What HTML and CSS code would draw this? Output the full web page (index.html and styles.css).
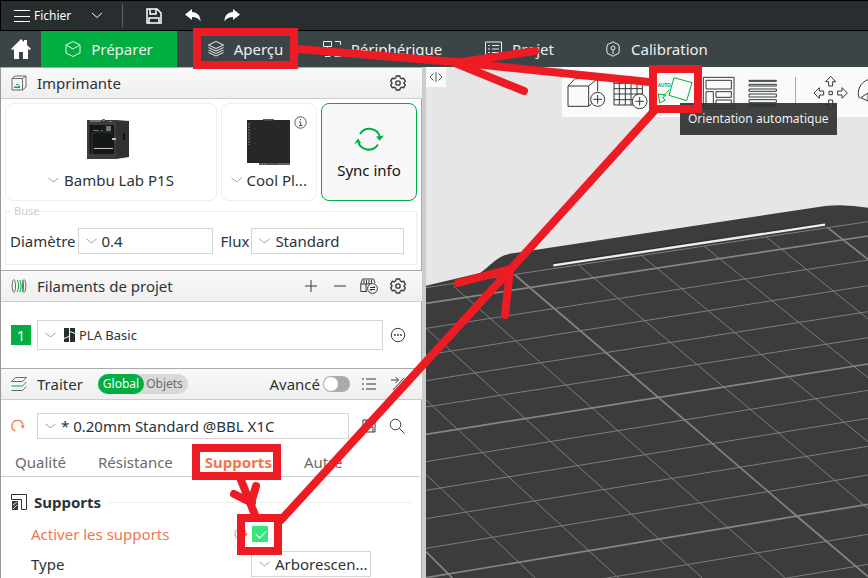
FILE: index.html
```html
<!DOCTYPE html>
<html lang="fr">
<head>
<meta charset="utf-8">
<title>Préparer</title>
<link rel="stylesheet" href="styles.css">
</head>
<body>
<svg class="defs" aria-hidden="true">
  <symbol id="chevron" viewBox="0 0 11 6"><path d="M.5 1C3 2.600 4 4.500 5.500 4.500S8 2.600 10.500 1"/></symbol>
  <symbol id="gear" viewBox="0 0 16 16"><path d="M6.300 1h3.400l.6 1.900 1.400.8 2-.4 1.600 2.900L13.900 8l1.400 1.800-1.600 2.900-2-.4-1.400.8-.6 1.900H6.300l-.6-1.900-1.400-.8-2 .4L.7 9.800 2.100 8 .7 6.200l1.600-2.900 2 .4 1.400-.8z"/><circle cx="8" cy="8" r="2.200"/></symbol>
  <symbol id="reset" viewBox="0 0 14 14"><path d="M4.500 12A5.500 5.500 0 1 1 12 6.500"/><path class="solid" d="M9.500 6.500h4.300L12 9.800z"/></symbol>
</svg>

<header class="titlebar">
  <button class="file-menu">
    <svg width="16" height="14" viewBox="0 0 16 14"><path d="M0 1.500h16M0 7.500h16M0 12.500h16"/></svg>
    Fichier
    <svg class="caret" width="12" height="7" viewBox="0 0 12 7"><path d="M1 1l5 4.500L11 1"/></svg>
  </button>
  <span class="bar-rule"></span>
  <button class="tool" aria-label="Enregistrer"><svg width="16" height="16" viewBox="0 0 16 16"><path stroke-width="1.500" d="M1 1h10l4 4v10H1zM4 1v5h6V1M3 15v-5h10v5"/></svg></button>
  <button class="tool solid-icon" aria-label="Annuler"><svg width="16" height="13" viewBox="0 0 16 13"><path d="M0 5.500L7 0v3c5 0 8.500 3.500 8.500 9.500C14 9.500 11 8 7 8v3z"/></svg></button>
  <button class="tool solid-icon" aria-label="Rétablir"><svg width="16" height="13" viewBox="0 0 16 13"><path d="M16 5.500L9 0v3C4 3 .5 6.500.5 12.500 2 9.500 5 8 9 8v3z"/></svg></button>
</header>

<nav class="tabs">
  <button class="home" aria-label="Accueil"><svg width="20" height="20" viewBox="0 0 20 20"><path d="M10 0L0 10l1.500 1L3 10v10h5v-7h4v7h5V10l1.500 1L20 10l-4-4V1h-3v2z"/></svg></button>
  <button class="tab active"><svg width="16" height="16" viewBox="0 0 16 16"><path d="M8 .5l7 3.500v8l-7 3.500L1 12V4zM1 4l7 4 7-4"/></svg>Préparer</button>
  <button class="tab"><svg width="16" height="16" viewBox="0 0 16 16"><path d="M8 .5L15.500 4 8 7.500.5 4zM.5 6.500L8 10l7.500-3.500M.5 9L8 12.500 15.500 9M.5 11.500L8 15l7.500-3.500"/></svg>Aperçu</button>
  <button class="tab"><svg width="18" height="16" viewBox="0 0 18 16"><path d="M.5.500h8v5h-8zM4.500 5.500v5M2 10.500h5v5H2M12 .5h5.500V4M17.500 11v4.500H12V12"/></svg>Périphérique</button>
  <button class="tab"><svg width="17" height="16" viewBox="0 0 17 16"><path d="M.5 1h16v14H.5zM3 4.500h2M7 4.500h7M3 8h2M7 8h7M3 11.500h2M7 11.500h7"/></svg>Projet</button>
  <button class="tab"><svg width="16" height="16" viewBox="0 0 16 16"><path d="M6 2L8 .7 10 2l3.500 1.500.7 2.500v4l-.7 2.500L10 14l-2 1.300L6 14l-3.500-1.500L1.800 10V6l.7-2.500z"/><circle cx="8" cy="7" r="2"/><path d="M8 9v4"/></svg>Calibration</button>
</nav>

<main class="workspace">
  <aside class="sidebar">
    <div class="head">
      <svg class="lead" width="16" height="16" viewBox="0 0 16 16"><path d="M1 3.500h10.500V15H1zM1 3.500L4 1h11L11.500 3.500M15 1v11l-3.500 3"/><path class="green" d="M3 12h6L7 9.500H5M3 12.500h6"/></svg>
      <h2>Imprimante</h2>
      <button class="icon-btn" aria-label="Réglages de l'imprimante"><svg width="16" height="16"><use href="#gear"/></svg></button>
    </div>

    <div class="cards">
      <div class="card">
        <svg width="48" height="41" viewBox="0 0 48 41"><path fill="#3b3d3d" d="M0 1h29v39H0z"/><path fill="#303131" d="M29 1l13 1v36l-13 2z"/><path fill="#151718" d="M2.500 6H27v29H2.500z"/><path fill="#6f7677" d="M3 1h11v2H3zM15 0h3v2h-3zM19 7h5v5h-5z"/><path d="M5 35V15l5-2h13l3 3M6 29h20" fill="none" stroke="#353738"/><path fill="#c0c0be" d="M7 29h19v1H7zM25 19h4v2h-4z"/><path fill="#777" d="M6 11h6v1H6zM14 11h2v1h-2zM21 8h2v1h-2zM22 2h3v1h-3z"/><path fill="#111" d="M36 14h2v7h-2z"/></svg>
        <label class="pick"><svg class="chev"><use href="#chevron"/></svg><select aria-label="Imprimante"><option>Bambu Lab P1S</option></select></label>
      </div>
      <div class="card plate">
        <svg width="44" height="46" viewBox="0 0 44 46"><path fill="#555" d="M16 0h11v3H16zM12 43h31v3H12z"/><path fill="#262828" d="M0 1h43v43H0z"/><path stroke="#858585" stroke-dasharray="2 1" d="M2 4v22M14 45h6M32 45h10"/><path stroke="#666" d="M17 1h9"/></svg>
        <button class="info" aria-label="Informations"><svg width="13" height="13" viewBox="0 0 13 13"><circle cx="6.500" cy="6.500" r="5.700"/><path d="M6.500 3v1.300M5 6h1.700v3.500M4.800 9.500h3.600"/></svg></button>
        <label class="pick"><svg class="chev"><use href="#chevron"/></svg><select aria-label="Plateau"><option>Cool Pl...</option></select></label>
      </div>
      <button class="card sync">
        <svg width="30" height="25" viewBox="0 0 30 25"><path d="M6 7A11 11 0 0 1 26 10M24 17.500A11 11 0 0 1 4 14"/><path class="solid" d="M22 9.500l3.700 4.300L30 8.500l-3.500.8zM0 17.500l4-6 3.500 5-3.500-1.500z"/></svg>
        Sync info
      </button>
    </div>

    <fieldset class="nozzle">
      <legend>Buse</legend>
      <label for="diam">Diamètre</label>
      <span class="field diam"><svg class="chev"><use href="#chevron"/></svg><select id="diam"><option>0.4</option></select></span>
      <label for="flux" class="flux-label">Flux</label>
      <span class="field flux"><svg class="chev"><use href="#chevron"/></svg><select id="flux"><option>Standard</option></select></span>
    </fieldset>

    <div class="head">
      <svg class="lead" width="16" height="16" viewBox="0 0 16 16"><path d="M3 1.500C.5 3 .5 13 3 14.500M13 1.500c2.500 1.500 2.500 11.500 0 13M3 1.500C5 3 5 13 3 14.500M13 1.500c-2 1.500-2 11.500 0 13"/><path class="green" d="M6 2c2 1.500 2 10.500 0 12M8.500 2c2 1.500 2 10.500 0 12M11 2c2 1.500 2 10.500 0 12"/></svg>
      <h2>Filaments de projet</h2>
      <button class="icon-btn" aria-label="Ajouter"><svg width="14" height="14" viewBox="0 0 14 14"><path d="M7 1v12M1 7h12"/></svg></button>
      <button class="icon-btn" aria-label="Retirer"><svg width="14" height="14" viewBox="0 0 14 14"><path d="M1 7h12"/></svg></button>
      <button class="icon-btn" aria-label="Synchroniser les filaments"><svg width="18" height="16" viewBox="0 0 18 16"><path d="M7 13.500H.8V6L2.500 1h11L15 5M1 6h12M4 2v4M6.500 2v4M9 2v4M11.500 2v4M6 6v7"/><circle cx="12.500" cy="10.500" r="4.900" fill="#f6f6f6"/><path d="M10 9.500h5l-1.500-1.500M15 11.500h-5l1.500 1.500"/></svg></button>
      <button class="icon-btn" aria-label="Réglages des filaments"><svg width="16" height="16"><use href="#gear"/></svg></button>
    </div>

    <div class="filament">
      <span class="slot">1</span>
      <span class="field fill"><svg class="chev"><use href="#chevron"/></svg><svg class="brand" width="11" height="14" viewBox="0 0 11 14"><path d="M0 0h5v8L0 10zM0 11l5-2v5H0zM6 0h5v5L6 3zM6 4l5 2v8H6z"/></svg><select aria-label="Filament 1"><option>PLA Basic</option></select></span>
      <button class="icon-btn" aria-label="Plus"><svg width="16" height="16" viewBox="0 0 16 16"><circle cx="8" cy="8" r="6.700"/><path class="dots" d="M4.300 8h1.400M7.300 8h1.400M10.300 8h1.400"/></svg></button>
    </div>

    <div class="head">
      <svg class="lead" width="16" height="16" viewBox="0 0 16 16"><path d="M4.500 1.500h11l-4 4H.5zM.5 14.500h11l4-4"/><path class="green" d="M.5 10h11l4-4"/></svg>
      <h2>Traiter</h2>
      <div class="segment"><button class="on">Global</button><button>Objets</button></div>
      <label class="advanced">Avancé<input type="checkbox" class="switch"></label>
      <button class="icon-btn" aria-label="Liste"><svg width="16" height="16" viewBox="0 0 16 16"><path d="M5 3h10M5 8h10M5 13h10M1 3h2M1 8h2M1 13h2"/></svg></button>
      <button class="icon-btn" aria-label="Comparer"><svg width="16" height="16" viewBox="0 0 16 16"><path d="M1 4h7M5.500 1L8.500 4l-3 3M14 2L3 14M15 11H9M11.500 8.500L9 11l2.500 3"/></svg></button>
    </div>

    <div class="preset">
      <button class="icon-btn warn" aria-label="Rétablir le profil"><svg width="14" height="14"><use href="#reset"/></svg></button>
      <span class="field fill"><svg class="chev"><use href="#chevron"/></svg><select aria-label="Profil"><option>* 0.20mm Standard @BBL X1C</option></select></span>
      <button class="icon-btn" aria-label="Enregistrer le profil"><svg width="14" height="14" viewBox="0 0 14 14"><path d="M1 1h12v12H1zM4 1v4h6V1M3 13V8h8v5"/></svg></button>
      <button class="icon-btn" aria-label="Rechercher"><svg width="16" height="16" viewBox="0 0 16 16"><circle cx="6.500" cy="6.500" r="5.300"/><path d="M10.500 10.500l5 5"/></svg></button>
    </div>

    <div class="subtabs">
      <button>Qualité</button><button>Résistance</button><button class="on">Supports</button><button>Autre</button>
    </div>

    <section class="options">
      <h3><svg width="16" height="16" viewBox="0 0 16 16"><path d="M.5.500h15v15h-5V5.500H.5z"/><path class="hatch" d="M1 7h6v9H1z"/><path class="light" d="M2 11l4-3M2 15l4-4"/></svg>Supports</h3>
      <div class="option changed">
        <label for="enable">Activer les supports</label>
        <svg class="mark" width="14" height="14"><use href="#reset"/></svg>
        <input type="checkbox" id="enable" class="tick" checked>
      </div>
      <div class="option">
        <label for="type">Type</label>
        <span class="field type"><svg class="chev"><use href="#chevron"/></svg><select id="type"><option>Arborescen...</option></select></span>
      </div>
    </section>
  </aside>

  <section class="canvas">
    <svg class="scene" viewBox="0 0 442 511" preserveAspectRatio="xMinYMin slice" aria-hidden="true">
      <g transform="translate(-6 123) scale(.33333)">
        <path fill="#3b3c3b" d="M18 287L180 249C215 225 235 193 280 190L1215 48Q1275 41 1344 53V1170H18z"/>
        <path fill="none" stroke="#2d2e2d" stroke-width="5" d="M400 220L1200 102"/>
        <path fill="none" stroke="#eee" stroke-width="7" d="M400 226L1215 104"/>
        <path class="thin" d="M18 293L1344 95M18 415L1344 210M18 495L1344 287M18 572L1344 365M18 651L1344 443M18 815L1344 601M18 901L1344 685M18 986L1344 769M18 1075L1344 855M555 1165L1344 1033M1095 1165L1344 1123"/>
        <path class="thin" d="M475 225L910 590 1344 955M665 197L1022 492 1344 755M852 168L1135 396 1344 563M1038 140L1344 387M100 288L515 653 1097 1165M18 415L392 755 848 1165M18 630L345 934 597 1165M18 853L347 1165"/>
        <path class="thick" d="M18 340L1344 138M18 733L1344 522M18 1163L1344 943M285 255L715 622 1130 978 1344 1160M1222 112L1344 208M18 1085L98 1165"/>
      </g>
    </svg>
    <button class="collapse" aria-label="Replier le panneau"><svg width="14" height="12" viewBox="0 0 14 12"><path d="M4.500 2.500L1 6l3.500 3.500M7 1v10M9.500 2.500L13 6 9.500 9.500"/></svg></button>
    <div class="toolbar">
      <button aria-label="Ajouter un objet"><svg viewBox="12 39 132 111"><path d="M24 75h62v61H24zM24 75l21-22h68L86 75M113 53v38M86 136l8-8"/><circle cx="113" cy="115" r="21"/><path d="M113 102v26M100 115h26"/></svg></button>
      <button aria-label="Ajouter un plateau"><svg viewBox="144 39 132 111"><path d="M162 52h85v80h-85zM178 52v80M196 52v80M213 52v80M231 52v80M162 67h85M162 83h85M162 99h85M162 116h85"/><circle cx="239" cy="121" r="22" fill="#fafafa"/><path d="M239 108v26M226 121h26"/></svg></button>
      <button class="auto" aria-label="Orientation automatique"><svg viewBox="276 39 132 111"><path d="M342 50l54 15-16 54-53-16zM295 99l22 3-9 9 8 6-17 9zM327 87l-18 19"/><text x="293" y="78">AUTO</text><path class="dark" d="M302 134h90"/></svg></button>
      <button aria-label="Organiser"><svg viewBox="408 39 132 111"><path d="M430 49h92v93h-92zM438 58h76v26h-76zM438 92h22v42h-22zM468 92h46v17h-46zM468 117h46v17h-46z"/></svg></button>
      <button aria-label="Hauteur de couche"><svg viewBox="540 39 132 111"><path d="M567 58h82v3h-82zM567 70h82v5h-82zM567 84h82v7h-82zM567 99h82v9h-82zM567 116h82v9h-82zM567 131h82v5h-82z"/></svg></button>
      <span class="tool-rule"></span>
      <button aria-label="Déplacer"><svg viewBox="744 39 132 111"><path d="M812 46l15 16h-9v13h-12V62h-9zM812 146l15-16h-9v-13h-12v13h-9zM762 96l16-16v10h13v12h-13v10zM862 96l-16-16v10h-13v12h13v10zM807 91h10v10h-10z"/></svg></button>
      <button aria-label="Pivoter"><svg viewBox="876 39 132 111"><path d="M898 112A42 42 0 1 1 940 138M902 110l22-14v24z"/></svg></button>
    </div>
    <div class="tooltip" role="tooltip">Orientation automatique</div>
  </section>
</main>

<svg class="markup" width="868" height="578" viewBox="0 0 868 578" aria-hidden="true">
  <path class="box" d="M197 32h97v33h-97zM653 69h45v40h-45zM196 448h81v28h-81zM241 518h37v33h-37z"/>
  <path d="M241 480L255 515M234 494L252 503M256 486L251 503M281 520L510 270 655 110M458 283L510 269 505 315M649 82L455 62 298 49M535 51L455 63 524 91"/>
</svg>
</body>
</html>
```
FILE: styles.css
```css
* { box-sizing: border-box; }
body {
  margin: 0;
  height: 100vh;
  display: flex;
  flex-direction: column;
  overflow: hidden;
  position: relative;
  background: #fff;
  color: #2b3436;
  font: 15px/20px "Noto Sans", "Open Sans", sans-serif;
}
button, select, input { font: inherit; color: inherit; margin: 0; }
button { border: 0; padding: 0; background: none; }
svg { display: block; flex: none; fill: none; stroke: currentColor; }
.solid { fill: currentColor; stroke: none; }
.defs { position: absolute; width: 0; height: 0; }
h2, h3 { margin: 0; font-size: 15px; font-weight: 400; }

.titlebar {
  display: flex;
  align-items: center;
  flex: none;
  height: 31px;
  padding-left: 13px;
  border: solid #000;
  border-width: 1px 0 1px 1px;
  background: #262e30;
  color: #fff;
  font-size: 12px;
}
.file-menu { display: flex; align-items: center; gap: 4px; }
.file-menu .caret { margin-left: 16px; }
.bar-rule { width: 1px; height: 23px; margin: 0 23px 0 19px; background: #5c6466; }
.tool { margin-right: 23px; }
.solid-icon svg { fill: currentColor; stroke: none; }

.tabs {
  display: flex;
  flex: none;
  height: 36px;
  background: #3b4446;
  color: #efefef;
}
.home { display: flex; align-items: center; justify-content: center; width: 41px; color: #fff; }
.home svg { fill: currentColor; stroke: none; }
.tab { display: flex; align-items: center; justify-content: center; gap: 10px; width: 137px; }
.tab.active { width: 136px; background: #00ae42; }

.workspace { display: flex; flex: 1; min-height: 0; }
.sidebar {
  flex: none;
  width: 426px;
  overflow: hidden;
  border-left: 1px solid #999;
  border-right: 4px solid #ccc;
  box-shadow: inset -1px 0 #aaa;
}
.head {
  display: flex;
  align-items: center;
  height: 32px;
  padding: 0 15px 0 10px;
  gap: 10px;
  border-top: 1px solid #aaa;
  border-bottom: 1px solid #ccc;
  background: linear-gradient(#f9f9f9, #efefef);
}
.head h2 { margin-right: auto; }
.lead { color: #6b6b6b; }
.green { stroke: #00ae42; }
.icon-btn { display: flex; justify-content: center; flex: none; width: 18px; color: #323a3c; }
.icon-btn use { stroke-width: 1.3; }
.head .icon-btn + .icon-btn { margin-left: 1px; }

.chev { width: 11px; height: 6px; color: #999; }
select { appearance: none; border: 0; padding: 0; background: none; outline: 0; }
.cards { display: grid; grid-template-columns: 212px 96px 96px; gap: 4px; padding: 4px; }
.card {
  position: relative;
  display: flex;
  flex-direction: column;
  align-items: center;
  height: 98px;
  padding-top: 15px;
  border: 1px solid #eee;
  border-radius: 8px;
}
.card > svg { stroke: none; }
.pick { display: flex; align-items: center; gap: 5px; margin-top: auto; padding-bottom: 10px; }
.info { position: absolute; top: 12px; right: 9px; color: #555; }
.card.sync { justify-content: center; gap: 8px; padding: 3px 0 0; border-color: #00ae42; background: #f8f8f8; color: #111; }
.sync svg { color: #00ae42; stroke: currentColor; stroke-width: 2; }

.field { display: flex; align-items: center; gap: 5px; height: 26px; padding-left: 7px; border: 1px solid #d5d5d5; background: #fff; }
.field select { flex: 1; min-width: 0; }
.field.fill { flex: 1; }
.nozzle {
  display: flex;
  align-items: center;
  min-width: 0;
  height: 60px;
  margin: 0 5px 5px 4px;
  padding: 0 12px 0 4px;
  border: 1px solid #eee;
}
.nozzle legend { padding: 0 3px; margin-left: 1px; color: #ccc; font-size: 11px; line-height: 12px; }
.diam { width: 135px; margin-left: 2px; }
.flux-label { margin-left: 8px; }
.flux { flex: 1; margin-left: 2px; }

.filament { display: flex; align-items: center; gap: 6px; padding: 18px 15px 18px 10px; font-size: 13px; }
.slot { width: 20px; background: #00ae42; color: #fff; text-align: center; font-size: 15px; }
.filament .field { height: 30px; }
.brand { fill: #262e30; stroke: none; margin: 0 -1px 0 3px; }
.dots { stroke-width: 2; }

.segment { display: flex; margin: 0 auto 0 5px; border-radius: 10px; background: #d9d9d9; color: #6b6b6b; font-size: 12px; }
.segment button { padding: 0 5px 0 2px; }
.segment .on { padding: 0 5px; border-radius: 10px; background: #00ae42; color: #fff; }
.head h2:has(+ .segment) { margin-right: 0; margin-left: 0; }
.advanced { display: flex; align-items: center; gap: 3px; }
.switch { appearance: none; width: 27px; height: 16px; border-radius: 8px; background: #aaa; }
.switch::before { content: ""; display: block; width: 14px; height: 14px; margin: 1px; border-radius: 50%; background: #fff; }

.preset { display: flex; align-items: center; gap: 10px; padding: 13px 16px 12px 8px; }
.preset .fill { margin-right: 1px; }
.warn { color: #f2754e; }

.subtabs { display: flex; gap: 32px; padding: 1px 14px 4px; border-bottom: 1px solid #ccc; color: #6b6b6b; }
.subtabs .on { color: #f2754e; font-weight: 700; }

.options { padding: 15px 10px 0; }
.options h3 { display: flex; align-items: center; gap: 7px; font-weight: 700; }
.options h3::after { content: ""; flex: 1; height: 1px; background: #eee; }
.hatch { fill: #323a3c; stroke: none; }
.light { stroke: #ddd; }
.option { display: grid; grid-template-columns: 203px auto; align-items: center; justify-content: start; height: 30px; padding-left: 20px; }
.option.changed { grid-template-columns: 203px 14px auto; margin-top: 7px; color: #f2754e; }
.option .field { width: 120px; margin-left: 17px; }
.tick { appearance: none; width: 16px; height: 16px; margin-left: 4px; border-radius: 1px; background: #36e678; }
.tick::before { content: ""; display: block; width: 9px; height: 5px; margin: 4px; border: solid #fff; border-width: 0 0 1px 1px; rotate: -45deg; }

.canvas { position: relative; flex: 1; min-width: 0; overflow: hidden; background: #e6e6e6; }
.scene { width: 100%; height: 100%; stroke: none; }
.thin { stroke: #7c7d7c; stroke-width: 3; }
.thick { stroke: #858685; stroke-width: 5; }
.collapse { position: absolute; top: 0; left: 0; display: flex; align-items: center; justify-content: center; width: 20px; height: 20px; background: #fafafa; color: #555; }
.toolbar {
  position: absolute;
  top: 0;
  left: 136px;
  right: 0;
  display: flex;
  align-items: center;
  height: 50px;
  padding-left: 2px;
  overflow: hidden;
  background: #fafafa;
  color: #323a3c;
}
.toolbar button { flex: none; }
.toolbar svg { width: 44px; height: 37px; stroke-width: 3; }
.toolbar .auto { color: #00ae42; }
.toolbar text { fill: currentColor; stroke: none; font-size: 14px; font-weight: 700; }
.dark { stroke: #323a3c; }
.tool-rule { flex: none; width: 1px; height: 30px; margin: 0 12px 0 11px; background: #aaa; }
.tooltip {
  position: absolute;
  top: 36px;
  left: 254px;
  padding: 6px 8px;
  background: rgb(48 49 49 / 92%);
  color: #eee;
  font-size: 12px;
}

.markup { position: absolute; top: 0; left: 0; pointer-events: none; color: #ed1c24; stroke-width: 8; stroke-linecap: round; stroke-linejoin: round; }
.box { stroke-linejoin: miter; }
```
